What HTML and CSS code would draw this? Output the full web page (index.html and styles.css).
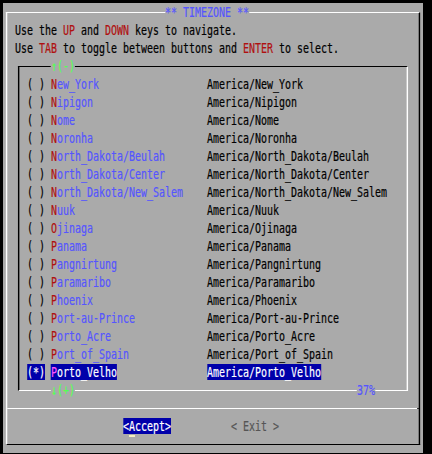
FILE: index.html
```html
<!DOCTYPE html>
<html>
<head>
<meta charset="utf-8">
<link rel="stylesheet" href="styles.css">
</head>
<body>
<div class="term">
  <div class="dialog">
    <div class="frame">
      <div class="row title-row"><span class="title">** TIMEZONE **</span></div>
      <div class="row msg">Use the <span class="red">UP</span> and <span class="red">DOWN</span> keys to navigate.</div>
      <div class="row msg">Use <span class="red">TAB</span> to toggle between buttons and <span class="red">ENTER</span> to select.</div>
      <div class="listbox">
        <div class="row lb-top"><span class="arrow">↑(-)</span></div>
        <div class="row item"><span class="radio">( )</span> <span class="name"><span class="lbl"><span class="key">N</span>ew_York</span></span><span class="tz">America/New_York</span></div>
        <div class="row item"><span class="radio">( )</span> <span class="name"><span class="lbl"><span class="key">N</span>ipigon</span></span><span class="tz">America/Nipigon</span></div>
        <div class="row item"><span class="radio">( )</span> <span class="name"><span class="lbl"><span class="key">N</span>ome</span></span><span class="tz">America/Nome</span></div>
        <div class="row item"><span class="radio">( )</span> <span class="name"><span class="lbl"><span class="key">N</span>oronha</span></span><span class="tz">America/Noronha</span></div>
        <div class="row item"><span class="radio">( )</span> <span class="name"><span class="lbl"><span class="key">N</span>orth_Dakota/Beulah</span></span><span class="tz">America/North_Dakota/Beulah</span></div>
        <div class="row item"><span class="radio">( )</span> <span class="name"><span class="lbl"><span class="key">N</span>orth_Dakota/Center</span></span><span class="tz">America/North_Dakota/Center</span></div>
        <div class="row item"><span class="radio">( )</span> <span class="name"><span class="lbl"><span class="key">N</span>orth_Dakota/New_Salem</span></span><span class="tz">America/North_Dakota/New_Salem</span></div>
        <div class="row item"><span class="radio">( )</span> <span class="name"><span class="lbl"><span class="key">N</span>uuk</span></span><span class="tz">America/Nuuk</span></div>
        <div class="row item"><span class="radio">( )</span> <span class="name"><span class="lbl"><span class="key">O</span>jinaga</span></span><span class="tz">America/Ojinaga</span></div>
        <div class="row item"><span class="radio">( )</span> <span class="name"><span class="lbl"><span class="key">P</span>anama</span></span><span class="tz">America/Panama</span></div>
        <div class="row item"><span class="radio">( )</span> <span class="name"><span class="lbl"><span class="key">P</span>angnirtung</span></span><span class="tz">America/Pangnirtung</span></div>
        <div class="row item"><span class="radio">( )</span> <span class="name"><span class="lbl"><span class="key">P</span>aramaribo</span></span><span class="tz">America/Paramaribo</span></div>
        <div class="row item"><span class="radio">( )</span> <span class="name"><span class="lbl"><span class="key">P</span>hoenix</span></span><span class="tz">America/Phoenix</span></div>
        <div class="row item"><span class="radio">( )</span> <span class="name"><span class="lbl"><span class="key">P</span>ort-au-Prince</span></span><span class="tz">America/Port-au-Prince</span></div>
        <div class="row item"><span class="radio">( )</span> <span class="name"><span class="lbl"><span class="key">P</span>orto_Acre</span></span><span class="tz">America/Porto_Acre</span></div>
        <div class="row item"><span class="radio">( )</span> <span class="name"><span class="lbl"><span class="key">P</span>ort_of_Spain</span></span><span class="tz">America/Port_of_Spain</span></div>
        <div class="row item sel"><span class="radio">(*)</span> <span class="name"><span class="lbl"><span class="key">P</span>orto_Velho</span></span><span class="tz">America/Porto_Velho</span></div>
        <div class="row lb-bot"><span class="arrow">↓(+)</span><span class="pct">37%</span></div>
      </div>
      <div class="sep"><i class="sep-w"></i><i class="sep-b"></i></div>
      <div class="row buttons"><span class="btn on">&lt;<span class="cur">A</span>ccept&gt;</span><span class="btn off">&lt; Exit &gt;</span></div>
    </div>
  </div>
</div>
</body>
</html>
```
FILE: styles.css
```css
html, body {
  margin: 0;
  padding: 0;
  background: #000;
  overflow: hidden;
}
body {
  width: 432px;
  height: 454px;
}
.term {
  padding: 3px 0 0 3px;
}
.dialog {
  width: 70ch;
  height: 450px;
  background: #aaaaaa;
  font-family: "DejaVu Sans Mono", monospace;
  font-size: 14px;
  line-height: 18px;
  color: #000;
  -webkit-text-stroke: 0.2px currentColor;
  transform: scaleX(0.71186);
  transform-origin: 0 0;
  overflow: hidden;
}
.frame {
  margin: 9px 0.5ch 0 0.5ch;
  border-top: 1px solid #fff;
  border-left: 2px solid #fff;
  border-right: 2px solid #000;
  border-bottom: 1px solid #000;
  padding: 0 calc(0.5ch - 2px) 9px;
}
.row {
  height: 18px;
  white-space: pre;
}
.title-row {
  margin-top: -10px;
  padding-left: 26ch;
}
.title {
  background: #aaaaaa;
  color: #5555ff;
}
.msg {
  padding-left: 1ch;
}
.red {
  color: #b01010;
}
.listbox {
  margin: 9px 0 8px 1.5ch;
  width: 65ch;
  box-sizing: border-box;
  border-top: 1px solid #000;
  border-left: 2px solid #000;
  border-right: 2px solid #fff;
  border-bottom: 1px solid #fff;
  padding-left: calc(0.5ch - 2px);
}
.lb-top {
  margin-top: -10px;
  padding-left: 5ch;
}
.lb-bot {
  margin-bottom: -9px;
  padding-left: 5ch;
}
.arrow {
  background: #aaaaaa;
  color: #55ff55;
}
.pct {
  margin-left: 47ch;
  background: #aaaaaa;
  color: #5555ff;
}
.item {
  padding-left: 1ch;
}
.name {
  display: inline-block;
  width: 26ch;
  color: #5555ff;
}
.key {
  color: #b01010;
}
.sel .radio,
.sel .lbl,
.sel .tz {
  background: #0000aa;
  color: #fff;
}
.sel .key {
  color: #ff55ff;
}
.sep {
  display: flex;
  height: 18px;
  margin: 0 calc(2px - 0.5ch);
}
.sep-w {
  flex: 1;
  height: 9px;
  border-bottom: 1px solid #fff;
}
.sep-b {
  width: calc(0.5ch - 2px);
  height: 9px;
  border-bottom: 1px solid #000;
}
.buttons {
  padding-left: 19ch;
}
.btn.on {
  background: #0000aa;
  color: #fff;
}
.cur {
  text-decoration: underline;
  text-decoration-color: #f4f0c0;
  text-decoration-thickness: 2px;
  text-underline-offset: 4px;
}
.btn.off {
  margin-left: 10ch;
  color: #555;
}
```
